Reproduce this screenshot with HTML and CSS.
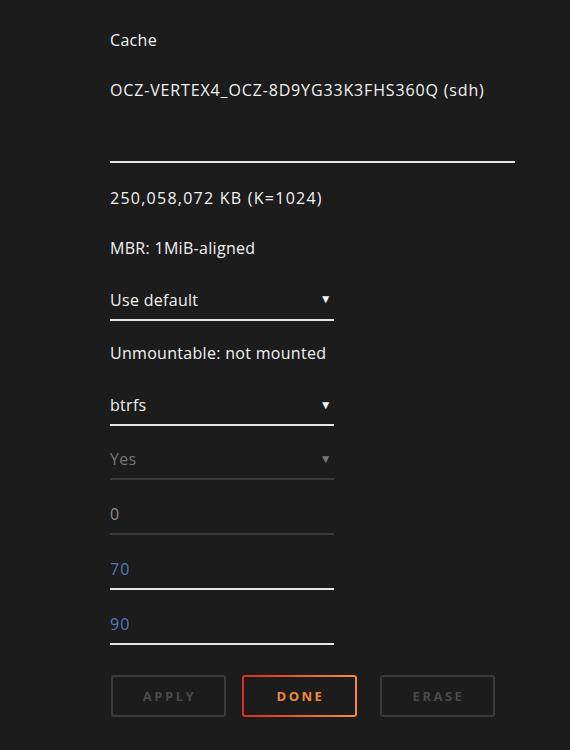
FILE: index.html
```html
<!DOCTYPE html>
<html lang="en">
<head>
    <meta charset="UTF-8">
    <meta name="viewport" content="width=device-width, initial-scale=1.0">
    <title>Cache</title>
    <link rel="stylesheet" href="styles.css">
</head>
<body>
    <div class="panel">
        <div class="text-row">Cache</div>
        <div class="text-row device-name">OCZ-VERTEX4_OCZ-8D9YG33K3FHS360Q (sdh)</div>
        <div class="wide-field"></div>

        <div class="text-row size-row">250,058,072 KB (K=1024)</div>
        <div class="text-row">MBR: 1MiB-aligned</div>

        <div class="control first-select">
            <span>Use default</span>
            <span class="arrow">&#9660;</span>
        </div>

        <div class="text-row status-row">Unmountable: not mounted</div>

        <div class="control fs-select">
            <span>btrfs</span>
            <span class="arrow">&#9660;</span>
        </div>

        <div class="control disabled">
            <span>Yes</span>
            <span class="arrow">&#9660;</span>
        </div>

        <div class="control disabled number">
            <span>0</span>
        </div>

        <div class="control number value">
            <span>70</span>
        </div>

        <div class="control number value">
            <span>90</span>
        </div>

        <div class="buttons">
            <button class="btn btn-off">APPLY</button>
            <button class="btn btn-done">DONE</button>
            <button class="btn btn-off btn-erase">ERASE</button>
        </div>
    </div>
</body>
</html>
```

FILE: styles.css
```css
body {
    margin: 0;
    background-color: #1c1c1c;
    color: #f2f2f2;
    font-family: "Open Sans", "Noto Sans", sans-serif;
    font-size: 16px;
    letter-spacing: 0.3px;
}

* {
    box-sizing: border-box;
}

.panel {
    padding: 15px 0 0 110px;
}

.text-row {
    height: 50px;
    display: flex;
    align-items: center;
}

.device-name {
    letter-spacing: 0.85px;
}

.wide-field {
    width: 405px;
    height: 48px;
    border-bottom: 2px solid #e6e6e6;
}

.size-row {
    margin-top: 10px;
    letter-spacing: 1.25px;
}

.status-row {
    margin-top: 7px;
}

.control {
    width: 224px;
    height: 38px;
    margin-top: 16px;
    border-bottom: 2px solid #e6e6e6;
    display: flex;
    align-items: center;
    justify-content: space-between;
    padding-bottom: 2px;
}

.first-select {
    margin-top: 9px;
    height: 39px;
}

.fs-select {
    margin-top: 10px;
}

.number {
    margin-top: 17px;
    letter-spacing: 1.2px;
}

.arrow {
    font-size: 12px;
    margin-right: 2px;
    padding-bottom: 2px;
}

.disabled {
    color: #777;
    border-bottom-color: #3a3a3a;
}

.disabled.number {
    color: #8c8c8c;
}

.value {
    color: #5576be;
}

.buttons {
    display: flex;
    margin-top: 30px;
    padding-left: 1px;
}

.btn {
    width: 115px;
    height: 42px;
    border-radius: 3px;
    background: transparent;
    font-family: "Open Sans", "Noto Sans", sans-serif;
    font-size: 13px;
    font-weight: bold;
    letter-spacing: 2.5px;
    padding: 0 0 0 2px;
}

.btn-off {
    border: 2px solid #3b3b3b;
    color: #4a4a4a;
}

.btn-done {
    margin-left: 16px;
    border: 2px solid transparent;
    background: linear-gradient(#1c1c1c, #1c1c1c) padding-box,
                linear-gradient(90deg, #e0292b, #f7902f) border-box;
    color: #f08a35;
}

.btn-erase {
    margin-left: 23px;
}
```
